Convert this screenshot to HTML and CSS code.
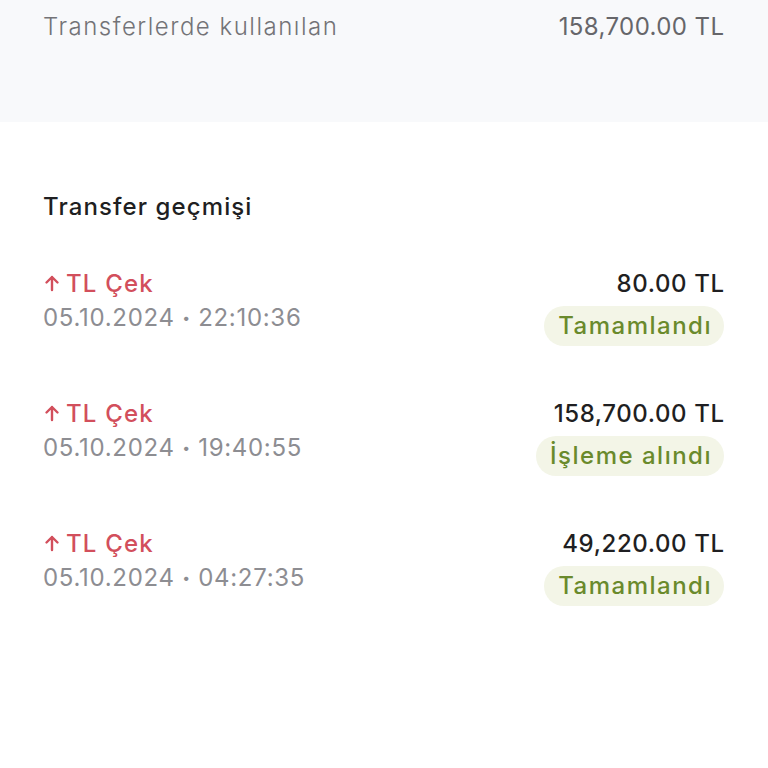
FILE: index.html
```html
<!DOCTYPE html>
<html lang="tr">
<head>
    <meta charset="UTF-8">
    <meta name="viewport" content="width=device-width, initial-scale=1.0">
    <title>Transfer geçmişi</title>
    <link rel="stylesheet" href="styles.css">
</head>
<body>
    <div class="summary">
        <div class="summary-row">
            <span class="summary-label">Transferlerde kullanılan</span>
            <span class="summary-value">158,700.00 TL</span>
        </div>
    </div>

    <div class="history">
        <div class="history-title">Transfer geçmişi</div>

        <div class="transfer">
            <div class="transfer-info">
                <div class="transfer-type">
                    <svg class="arrow" viewBox="0 0 18 18" width="18" height="18"><path d="M9 16V3M3.5 8.5L9 3l5.5 5.5" fill="none" stroke="currentColor" stroke-width="2.4" stroke-linecap="round" stroke-linejoin="round"/></svg>
                    TL Çek
                </div>
                <div class="transfer-date">05.10.2024 <span class="dot">•</span> 22:10:36</div>
            </div>
            <div class="transfer-side">
                <div class="transfer-amount">80.00 TL</div>
                <div class="badge">Tamamlandı</div>
            </div>
        </div>

        <div class="transfer">
            <div class="transfer-info">
                <div class="transfer-type">
                    <svg class="arrow" viewBox="0 0 18 18" width="18" height="18"><path d="M9 16V3M3.5 8.5L9 3l5.5 5.5" fill="none" stroke="currentColor" stroke-width="2.4" stroke-linecap="round" stroke-linejoin="round"/></svg>
                    TL Çek
                </div>
                <div class="transfer-date">05.10.2024 <span class="dot">•</span> 19:40:55</div>
            </div>
            <div class="transfer-side">
                <div class="transfer-amount">158,700.00 TL</div>
                <div class="badge">İşleme alındı</div>
            </div>
        </div>

        <div class="transfer">
            <div class="transfer-info">
                <div class="transfer-type">
                    <svg class="arrow" viewBox="0 0 18 18" width="18" height="18"><path d="M9 16V3M3.5 8.5L9 3l5.5 5.5" fill="none" stroke="currentColor" stroke-width="2.4" stroke-linecap="round" stroke-linejoin="round"/></svg>
                    TL Çek
                </div>
                <div class="transfer-date">05.10.2024 <span class="dot">•</span> 04:27:35</div>
            </div>
            <div class="transfer-side">
                <div class="transfer-amount">49,220.00 TL</div>
                <div class="badge">Tamamlandı</div>
            </div>
        </div>
    </div>
</body>
</html>
```

FILE: styles.css
```css
* {
    margin: 0;
    padding: 0;
    box-sizing: border-box;
}

body {
    font-family: "Inter", "Noto Sans", sans-serif;
    background: #ffffff;
    color: #1f1f22;
    width: 768px;
    height: 768px;
    overflow: hidden;
}

.summary {
    background: #f8f9fb;
    height: 122px;
    padding: 11px 44px 0 43px;
}

.summary-row {
    display: flex;
    justify-content: space-between;
    align-items: center;
    font-size: 24px;
    line-height: 32px;
}

.summary-label {
    color: #737377;
    font-weight: 300;
    letter-spacing: 1.5px;
}

.summary-value {
    color: #66666a;
    font-weight: 400;
    letter-spacing: 0.4px;
    margin-right: -0.4px;
}

.history {
    padding: 70px 44px 0 43px;
}

.history-title {
    font-size: 24px;
    font-weight: 500;
    line-height: 30px;
    letter-spacing: 1.1px;
    margin-bottom: 47px;
}

.transfer {
    display: flex;
    justify-content: space-between;
    align-items: flex-start;
    height: 130px;
}

.transfer-type {
    display: flex;
    align-items: center;
    gap: 5px;
    color: #d24f5c;
    font-size: 24px;
    font-weight: 500;
    line-height: 30px;
    letter-spacing: 1.2px;
}

.arrow {
    margin-top: -2px;
}

.transfer-date {
    color: #8d8d92;
    font-size: 24px;
    line-height: 30px;
    letter-spacing: 0.7px;
    margin-top: 4px;
}

.dot {
    font-size: 14px;
    vertical-align: 3px;
}

.transfer-side {
    display: flex;
    flex-direction: column;
    align-items: flex-end;
}

.transfer-amount {
    font-size: 24px;
    font-weight: 500;
    line-height: 30px;
    letter-spacing: 0.6px;
    margin-right: -0.6px;
}

.badge {
    margin-top: 7px;
    background: #f3f5e7;
    color: #6a8a2c;
    font-size: 24px;
    font-weight: 500;
    line-height: 40px;
    letter-spacing: 1.5px;
    padding: 0 12px 0 14px;
    border-radius: 20px;
}
```
